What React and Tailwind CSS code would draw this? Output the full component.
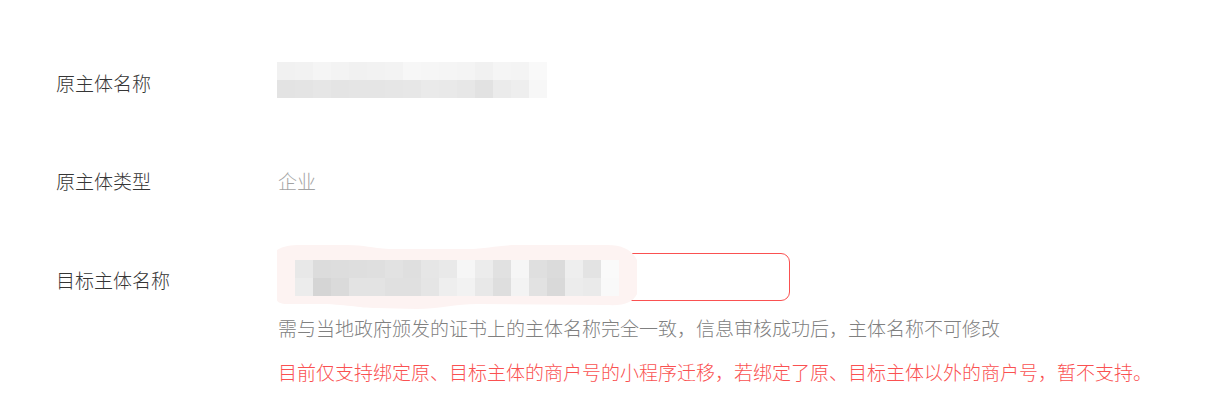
import React from "react";

const row1Top = ["#f1f1f1","#f2f2f2","#f5f5f5","#f3f3f3","#f1f1f1","#f2f2f2","#f3f3f3","#f7f7f7","#f6f6f6","#f5f5f5","#f4f4f4","#f1f1f1","#f5f5f5","#f4f4f4","#f9f9f9"];
const row1Bot = ["#e3e3e3","#e4e4e4","#e6e6e6","#e4e4e4","#e5e5e5","#e5e5e5","#e6e6e6","#e7e7e7","#eaeaea","#e9e9e9","#e7e7e7","#e2e2e2","#ebebeb","#eeeeee","#f7f7f7"];
const row3Top = ["#e8e8e8","#dcdcdc","#dddddd","#dedede","#dfdfdf","#e2e2e2","#dfdfdf","#e6e6e6","#e9e9e9","#f6f6f6","#ececec","#e1e1e1","#f6f6f6","#dfdfdf","#dbdbdb","#eeeeee","#e3e3e3","#fafafa"];
const row3Bot = ["#ececec","#d5d5d5","#dadada","#e3e3e3","#e3e3e3","#e0e0e0","#e0e0e0","#e5e5e5","#eeeeee","#f2f2f2","#e8e8e8","#dedede","#f3f3f3","#e2e2e2","#d9d9d9","#ececec","#eaeaea","#f9f9f9"];

function Mosaic({ top, bot }) {
  return (
    <div className="flex flex-col">
      <div className="flex">
        {top.map((c, i) => (
          <div key={i} className="w-[18px] h-[18px]" style={{ backgroundColor: c }} />
        ))}
      </div>
      <div className="flex">
        {bot.map((c, i) => (
          <div key={i} className="w-[18px] h-[18px]" style={{ backgroundColor: c }} />
        ))}
      </div>
    </div>
  );
}

export default function App() {
  return (
    <div
      className="w-full h-[410px] bg-white pl-[56px] pt-[62px] text-[19px] font-light"
      style={{ fontFamily: '"Noto Sans CJK SC", "Noto Sans", sans-serif' }}
    >
      <div className="flex items-start h-[36px]">
        <div className="w-[221px] leading-[36px] mt-[3px] text-[#353535]">原主体名称</div>
        <Mosaic top={row1Top} bot={row1Bot} />
      </div>

      <div className="flex items-center h-[36px] mt-[65px]">
        <div className="w-[222px] leading-[36px] text-[#353535]">原主体类型</div>
        <div className="leading-[36px] text-[#a3a3a3]">企业</div>
      </div>

      <div className="flex items-center h-[48px] mt-[54px]">
        <div className="w-[222px] leading-[36px] mt-[5px] text-[#353535]">目标主体名称</div>
        <div className="relative w-[512px] h-[48px] rounded-[9px] border border-[#fa5151] bg-white">
          <svg
            className="absolute left-[-2px] top-[-10px]"
            width="362"
            height="66"
            viewBox="0 0 362 66"
          >
            <path
              d="M0 6 C6 2 14 1 24 1 L70 1 C88 1 94 4 112 5 L190 5 C210 5 220 1 240 1 L330 1 C348 1 356 8 360 16 L360 50 C356 58 348 62 330 61 L200 60 C180 60 160 65 140 65 L100 64 C80 64 70 60 40 60 L10 60 C4 60 0 58 0 56 Z"
              fill="#fdf3f2"
            />
          </svg>
          <div className="absolute left-[16px] top-[6px]">
            <Mosaic top={row3Top} bot={row3Bot} />
          </div>
        </div>
      </div>

      <div className="pl-[222px] mt-[13px] leading-[28px] text-[#808080]">
        需与当地政府颁发的证书上的主体名称完全一致，信息审核成功后，主体名称不可修改
      </div>
      <div className="pl-[222px] mt-[16px] leading-[28px] text-[#fa5151]">
        目前仅支持绑定原、目标主体的商户号的小程序迁移，若绑定了原、目标主体以外的商户号，暂不支持。
      </div>
    </div>
  );
}
